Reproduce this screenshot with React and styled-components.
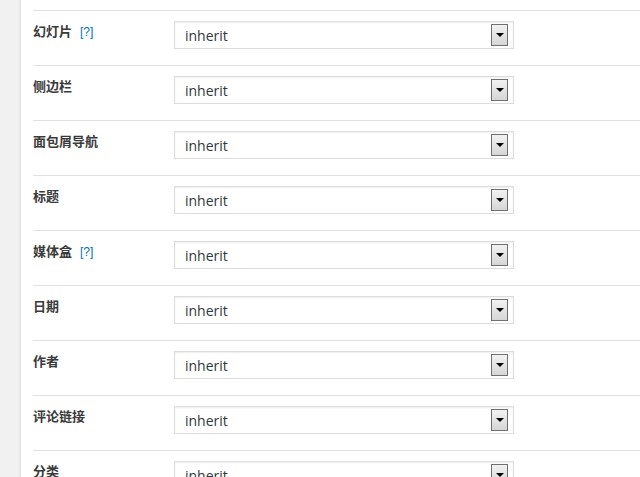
import React from "react";
import styled, { createGlobalStyle } from "styled-components";

const GlobalStyle = createGlobalStyle`
  html, body {
    margin: 0;
    padding: 0;
    background: #f1f1f1;
    overflow: hidden;
  }
`;

const Page = styled.div`
  display: flex;
  height: 477px;
  overflow: hidden;
`;

const Gutter = styled.div`
  flex: 0 0 20px;
  background: #f1f1f1;
`;

const Panel = styled.div`
  flex: 1;
  background: #fff;
  border-left: 1px solid #e5e5e5;
  box-shadow: -1px 0 1px rgba(0, 0, 0, 0.04);
  padding: 10px 0 0 12px;
`;

const Row = styled.div`
  display: flex;
  align-items: flex-start;
  height: 54px;
  border-top: 1px solid #e1e1e1;
`;

const Label = styled.div`
  flex: 0 0 141px;
  padding-top: 11px;
  font-family: "Noto Sans CJK SC", "Liberation Sans", sans-serif;
  font-size: 13px;
  font-weight: 700;
  line-height: 18px;
  color: #3a3a3a;
`;

const Help = styled.span`
  margin-left: 8px;
  font-family: "Liberation Sans", sans-serif;
  font-weight: 400;
  font-size: 12px;
  color: #0073aa;
`;

const Select = styled.div`
  margin-top: 10px;
  box-sizing: border-box;
  width: 340px;
  height: 28px;
  display: flex;
  align-items: center;
  justify-content: space-between;
  padding: 0 5px 0 10px;
  border: 1px solid #ddd;
  box-shadow: inset 0 1px 2px rgba(0, 0, 0, 0.07);
  background: #fff;
  font-family: "Open Sans", "Liberation Sans", sans-serif;
  font-size: 14px;
  color: #32373c;
`;

const Arrow = styled.span`
  box-sizing: border-box;
  width: 17px;
  height: 22px;
  border: 1px solid #707070;
  background: linear-gradient(#f2f2f2, #d6d6d6);
  display: flex;
  align-items: center;
  justify-content: center;

  &::after {
    content: "";
    border-left: 4px solid transparent;
    border-right: 4px solid transparent;
    border-top: 4px solid #000;
  }
`;

const fields = [
  { name: "幻灯片", help: true },
  { name: "侧边栏" },
  { name: "面包屑导航" },
  { name: "标题" },
  { name: "媒体盒", help: true },
  { name: "日期" },
  { name: "作者" },
  { name: "评论链接" },
  { name: "分类" },
];

export default function App() {
  return (
    <Page>
      <GlobalStyle />
      <Gutter />
      <Panel>
        {fields.map((f) => (
          <Row key={f.name}>
            <Label>
              {f.name}
              {f.help && <Help>[?]</Help>}
            </Label>
            <Select>
              inherit
              <Arrow />
            </Select>
          </Row>
        ))}
      </Panel>
    </Page>
  );
}
